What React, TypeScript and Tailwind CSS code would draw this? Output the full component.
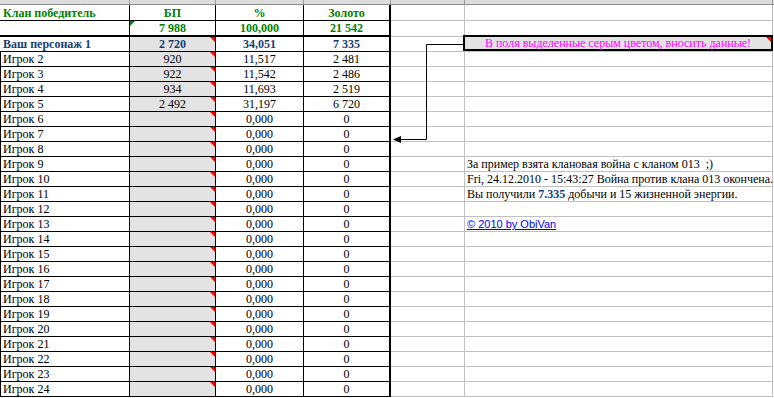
import type { ReactNode } from 'react';

interface Player {
  name: string;
  bp: string;
  pct: string;
  gold: string;
}

const players: Player[] = [
  { name: 'Игрок 2', bp: '920', pct: '11,517', gold: '2 481' },
  { name: 'Игрок 3', bp: '922', pct: '11,542', gold: '2 486' },
  { name: 'Игрок 4', bp: '934', pct: '11,693', gold: '2 519' },
  { name: 'Игрок 5', bp: '2 492', pct: '31,197', gold: '6 720' },
  ...Array.from({ length: 19 }, (_, i) => ({
    name: `Игрок ${i + 6}`,
    bp: '',
    pct: '0,000',
    gold: '0',
  })),
];

// notes on the right, keyed by player row index
const notes: Record<number, ReactNode> = {
  7: <span className="whitespace-pre">За пример взята клановая война с кланом 013  ;)</span>,
  8: <span>Fri, 24.12.2010 - 15:43:27 Война против клана 013 окончена.</span>,
  9: (
    <span>
      Вы получили <b className="text-[#153e75]">7.335</b> добычи и 15 жизненной энергии.
    </span>
  ),
  11: (
    <span className="font-['Liberation_Sans',Arial,sans-serif] text-[11px] text-[#0000ff] underline">
      © 2010 by ObiVan
    </span>
  ),
};

const A = 'w-[130px] shrink-0';
const B = 'w-[86px] shrink-0';
const C = 'w-[88px] shrink-0';
const D = 'w-[87px] shrink-0';
const E = 'w-[74px] shrink-0';
const F = 'w-[308px] shrink-0';

const cell = 'relative flex items-end leading-[14px] whitespace-nowrap';

function Comment() {
  return (
    <span className="absolute right-0 top-0 h-0 w-0 border-l-[5px] border-t-[5px] border-l-transparent border-t-[#ff0000]" />
  );
}

function ExtraCells() {
  return (
    <>
      <div className={`${E} border-r border-b border-[#c0c0c0]`} />
      <div className={`${F} border-r border-b border-[#c0c0c0]`} />
    </>
  );
}

export default function App() {
  return (
    <div className="relative h-[398px] w-[774px] overflow-hidden bg-white font-['Liberation_Serif','Times_New_Roman',serif] text-[12px] text-black">
      {/* column header strip */}
      <div className="flex h-[5px] border-b border-[#8e8e8e] bg-[#dcdcdc]">
        <div className={`${A} border-r border-[#9a9a9a]`} />
        <div className={`${B} border-r border-[#9a9a9a]`} />
        <div className={`${C} border-r border-[#9a9a9a]`} />
        <div className={`${D} border-r border-[#9a9a9a]`} />
        <div className={`${E} border-r border-[#9a9a9a]`} />
        <div className={`${F} border-r border-[#9a9a9a]`} />
      </div>

      {/* header */}
      <div className="flex h-[16px] font-bold text-[#008000]">
        <div className={`${A} ${cell} border-r border-b border-black pl-[3px]`}>Клан победитель</div>
        <div className={`${B} ${cell} justify-center border-r border-b border-black`}>БП</div>
        <div className={`${C} ${cell} justify-center border-r border-b border-black`}>%</div>
        <div className={`${D} ${cell} justify-center border-r-2 border-b border-black`}>Золото</div>
        <ExtraCells />
      </div>

      {/* totals */}
      <div className="flex h-[16px] font-bold text-[#008000]">
        <div className={`${A} ${cell} border-r border-b-2 border-black`} />
        <div className={`${B} ${cell} justify-center border-r border-b-2 border-black`}>
          <span className="absolute left-0 top-0 h-0 w-0 border-r-[5px] border-t-[5px] border-r-transparent border-t-[#008000]" />
          7 988
        </div>
        <div className={`${C} ${cell} justify-center border-r border-b-2 border-black`}>100,000</div>
        <div className={`${D} ${cell} justify-center border-r-2 border-b-2 border-black`}>21 542</div>
        <ExtraCells />
      </div>

      {/* own character */}
      <div className="flex h-[15px] font-bold text-[#153e75]">
        <div className={`${A} ${cell} border-r border-b border-black pl-[3px]`}>Ваш персонаж 1</div>
        <div className={`${B} ${cell} justify-center border-r border-b border-black bg-[#e3e3e3]`}>
          <Comment />2 720
        </div>
        <div className={`${C} ${cell} justify-center border-r border-b border-black`}>34,051</div>
        <div className={`${D} ${cell} justify-center border-r-2 border-b border-black`}>7 335</div>
        <div className={`${E} border-r border-b border-[#c0c0c0]`} />
        <div className={`${F} relative border-r border-b border-[#c0c0c0]`}>
          <div className="absolute -left-[2px] -top-[2px] -right-[1px] bottom-0 flex items-center justify-center border-2 border-black bg-[#e3e3e3] font-normal text-[#ff00ff]">
            <span className="absolute right-0 top-0 h-0 w-0 border-l-[5px] border-t-[5px] border-l-transparent border-t-[#ff0000]" />
            В поля выделенные серым цветом, вносить данные!
          </div>
        </div>
      </div>

      {/* players */}
      {players.map((p, i) => (
        <div key={p.name} className="flex h-[15px]">
          <div className={`${A} ${cell} border-l border-r border-b border-black pl-[2px]`}>{p.name}</div>
          <div className={`${B} ${cell} justify-center border-r border-b border-black bg-[#e3e3e3]`}>
            <Comment />
            {p.bp}
          </div>
          <div className={`${C} ${cell} justify-center border-r border-b border-black`}>{p.pct}</div>
          <div className={`${D} ${cell} justify-center border-r-2 border-b border-black`}>{p.gold}</div>
          <div className={`${E} border-r border-b border-[#c0c0c0]`} />
          <div className={`${F} ${cell} border-r border-b border-[#c0c0c0] pl-[2px]`}>{notes[i]}</div>
        </div>
      ))}

      {/* connector arrow */}
      <svg className="pointer-events-none absolute left-0 top-0" width="774" height="398">
        <path d="M463 44.5 H426.5 V139.5 H400" fill="none" stroke="#000" strokeWidth="1" />
        <polygon points="393,139.5 401,136 401,143" fill="#000" />
      </svg>
    </div>
  );
}
